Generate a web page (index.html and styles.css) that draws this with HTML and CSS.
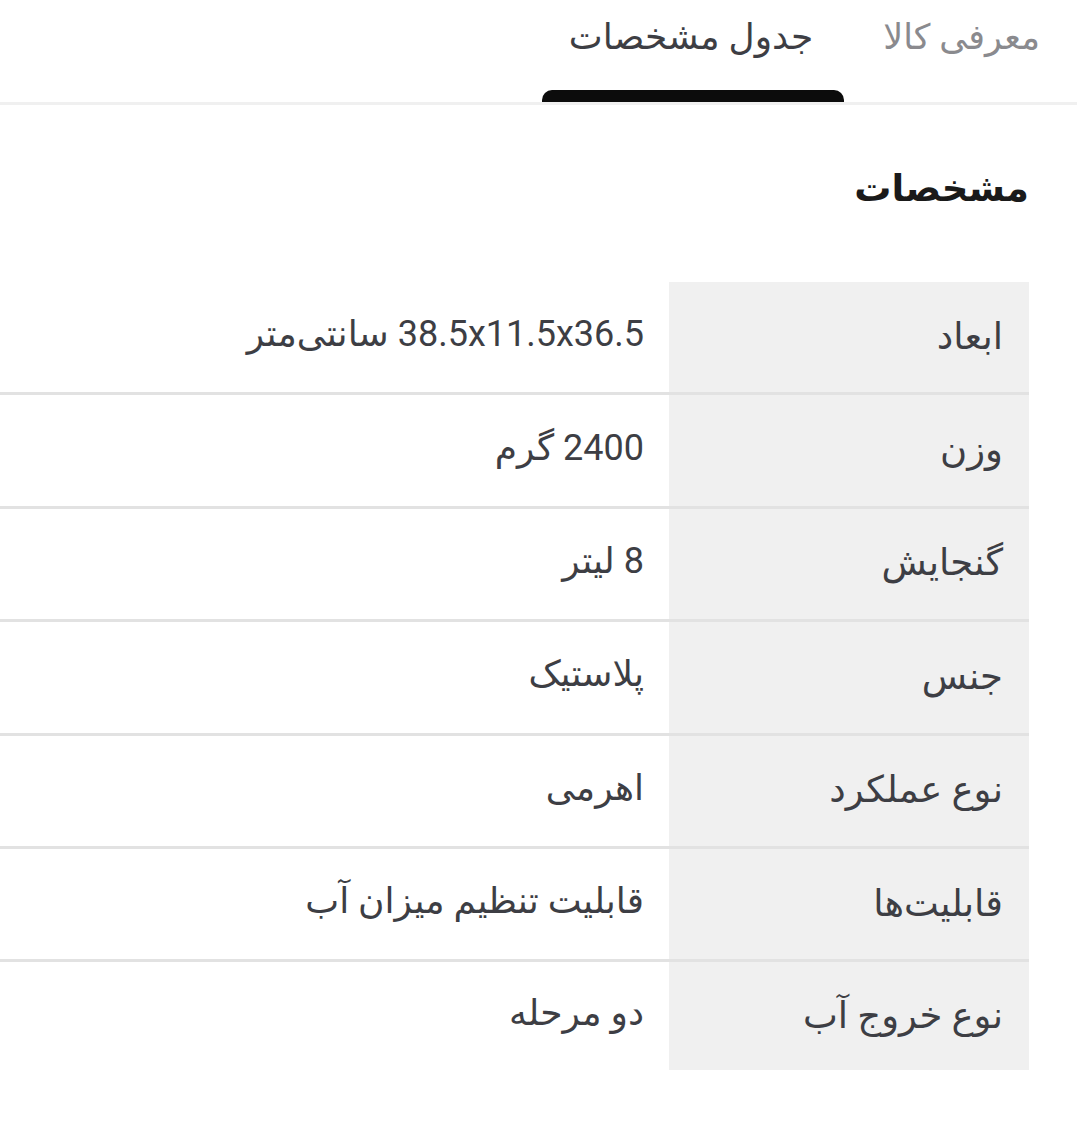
FILE: index.html
```html
<!DOCTYPE html>
<html lang="fa" dir="rtl">
<head>
<meta charset="utf-8">
<title>مشخصات</title>
<link rel="stylesheet" href="styles.css">
</head>
<body>
<nav class="tabs">
  <div class="tab">معرفی کالا</div>
  <div class="tab tab-active">جدول مشخصات</div>
</nav>
<section class="specs">
  <h2 class="specs-title">مشخصات</h2>
  <div class="table">
    <div class="row"><div class="label">ابعاد</div><div class="value">38.5x11.5x36.5 سانتی‌متر</div></div>
    <div class="row"><div class="label">وزن</div><div class="value">2400 گرم</div></div>
    <div class="row"><div class="label">گنجایش</div><div class="value">8 لیتر</div></div>
    <div class="row"><div class="label">جنس</div><div class="value">پلاستیک</div></div>
    <div class="row"><div class="label">نوع عملکرد</div><div class="value">اهرمی</div></div>
    <div class="row"><div class="label">قابلیت‌ها</div><div class="value">قابلیت تنظیم میزان آب</div></div>
    <div class="row"><div class="label">نوع خروج آب</div><div class="value">دو مرحله</div></div>
  </div>
</section>
</body>
</html>
```
FILE: styles.css
```css
html, body {
  margin: 0;
  padding: 0;
  background: #ffffff;
}
body {
  direction: rtl;
  font-family: Roboto, "DejaVu Sans", sans-serif;
  color: #3d3e44;
  width: 1077px;
  overflow: hidden;
}
.tabs {
  display: flex;
  gap: 9px;
  padding-right: 7px;
  height: 102px;
  border-bottom: 3px solid #f0f0f0;
}
.tab {
  padding: 0 30px;
  padding-top: 20px;
  font-size: 35px;
  line-height: 1;
  display: flex;
  align-items: flex-start;
  color: #8a8a8e;
  position: relative;
}
.tab-active {
  color: #3d3e44;
  font-size: 36px;
  padding-top: 19px;
  padding-left: 27px;
  padding-right: 31px;
}
.tab-active::after {
  content: "";
  position: absolute;
  left: 0;
  right: 0;
  bottom: 0;
  height: 12px;
  background: #0c0c0c;
  border-radius: 10px 10px 0 0;
}
.specs {
  padding-right: 48px;
}
.specs-title {
  margin: 0;
  padding-top: 62px;
  font-size: 37px;
  font-weight: bold;
  color: #1a1a1a;
  line-height: 44px;
  height: 115px;
}
.table {
  display: flex;
  flex-direction: column;
}
.row {
  display: flex;
  height: 110.4px;
  border-bottom: 3px solid #e2e2e2;
}
.row:last-child {
  border-bottom: none;
  height: 108px;
}
.label {
  width: 360px;
  flex: none;
  background: #f0f0f0;
  box-sizing: border-box;
  padding-right: 26px;
  padding-bottom: 2px;
  display: flex;
  align-items: center;
  font-size: 37px;
}
.value {
  flex: 1;
  box-sizing: border-box;
  padding-right: 25px;
  padding-bottom: 6px;
  display: flex;
  align-items: center;
  font-size: 36px;
}
```
